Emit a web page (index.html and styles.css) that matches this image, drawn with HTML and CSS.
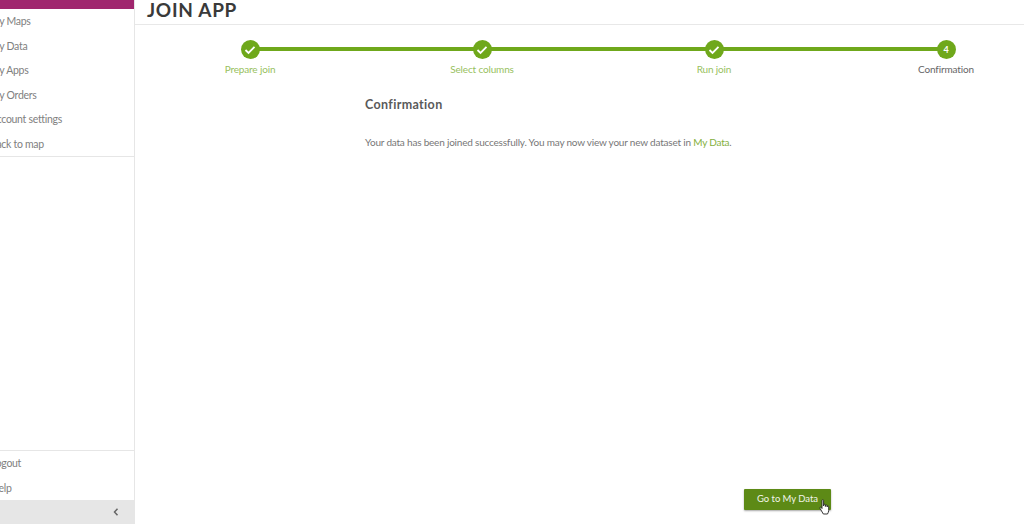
FILE: index.html
```html
<!DOCTYPE html>
<html lang="en">
<head>
<meta charset="utf-8">
<title>Join App</title>
<link rel="stylesheet" href="styles.css">
</head>
<body>
<div class="app">
  <aside class="sidebar">
    <div class="brand"></div>
    <nav class="nav nav-top">
      <a class="nav-item">My Maps</a>
      <a class="nav-item">My Data</a>
      <a class="nav-item">My Apps</a>
      <a class="nav-item">My Orders</a>
      <a class="nav-item">Account settings</a>
      <a class="nav-item">Back to map</a>
    </nav>
    <nav class="nav nav-bottom">
      <a class="nav-item">Logout</a>
      <a class="nav-item">Help</a>
    </nav>
    <div class="collapse">
      <svg class="collapse-icon" width="6" height="8" viewBox="0 0 6 8"><path d="M4.500 .8 1.500 4l3 3.200" fill="none" stroke="#666" stroke-width="1.500"/></svg>
    </div>
  </aside>
  <main class="main">
    <header class="header"><h1 class="title">JOIN APP</h1></header>
    <ol class="stepper">
      <li class="step done">
        <span class="dot"><svg width="12" height="10" viewBox="0 0 12 10"><path d="M1.500 5 4.500 8 10.500 1.800" fill="none" stroke="#fff" stroke-width="1.800"/></svg></span>
        <span class="label">Prepare join</span>
      </li>
      <li class="step done">
        <span class="dot"><svg width="12" height="10" viewBox="0 0 12 10"><path d="M1.500 5 4.500 8 10.500 1.800" fill="none" stroke="#fff" stroke-width="1.800"/></svg></span>
        <span class="label">Select columns</span>
      </li>
      <li class="step done">
        <span class="dot"><svg width="12" height="10" viewBox="0 0 12 10"><path d="M1.500 5 4.500 8 10.500 1.800" fill="none" stroke="#fff" stroke-width="1.800"/></svg></span>
        <span class="label">Run join</span>
      </li>
      <li class="step current">
        <span class="dot">4</span>
        <span class="label">Confirmation</span>
      </li>
    </ol>
    <section class="content">
      <h2 class="subtitle">Confirmation</h2>
      <p class="message">Your data has been joined successfully. You may now view your new dataset in <a class="link">My Data</a>.</p>
    </section>
    <div class="actions">
      <button class="button">Go to My Data
        <svg class="cursor" width="12" height="17" viewBox="0 0 12 17"><path d="M3 1.500c0-1 1.600-1 1.600 0V7l.2-1.200c.3-.8 1.500-.7 1.600.1V7.500l.2-1c.3-.7 1.400-.6 1.500.2v1.300l.2-.6c.4-.6 1.300-.4 1.400.3v3.800c0 1.500-.7 2.300-1.200 3.500H4.300L1 9.300c-.4-.9.500-1.500 1.200-.9L3 9.500z" fill="#fff" stroke="#222" stroke-width=".9"/></svg>
      </button>
    </div>
  </main>
</div>
</body>
</html>
```
FILE: styles.css
```css
* { box-sizing: border-box; }
html, body { margin: 0; height: 100%; }
body {
  width: 1024px;
  height: 524px;
  overflow: hidden;
  background: #fff;
  font-family: Lato, "Open Sans", sans-serif;
  color: #666;
}
.app { display: flex; height: 524px; }

.sidebar {
  width: 135px;
  flex: none;
  display: flex;
  flex-direction: column;
  border-right: 1px solid #e6e6e6;
  overflow: hidden;
}
.brand { height: 9px; background: #a0266e; flex: none; }
.nav { display: flex; flex-direction: column; }
.nav-top {
  border-bottom: 1px solid #e6e6e6;
  height: 148px;
  flex: none;
}
.nav-bottom {
  margin-top: auto;
  border-top: 1px solid #e6e6e6;
  height: 50px;
  flex: none;
}
.nav-item {
  height: 24.500px;
  line-height: 24px;
  margin-left: -10px;
  font-size: 10.500px;
  letter-spacing: -.3px;
  color: #808080;
  white-space: nowrap;
}
.nav-bottom .nav-item { margin-left: -9px; }
.collapse {
  height: 24px;
  flex: none;
  background: #e6e6e6;
  display: flex;
  align-items: center;
  justify-content: flex-end;
  padding-right: 15px;
}

.main { flex: 1; min-width: 0; display: flex; flex-direction: column; overflow: hidden; }
.header {
  height: 25px;
  flex: none;
  border-bottom: 1px solid #e8e8e8;
  padding-left: 12px;
}
.title {
  margin: 0;
  font-size: 19px;
  line-height: 20px;
  font-weight: 700;
  letter-spacing: .7px;
  color: #3a3a3a;
}

.stepper {
  list-style: none;
  margin: 15px 0 0 -1px;
  padding: 0;
  display: grid;
  grid-template-columns: repeat(4, 232px);
  flex: none;
}
.step {
  position: relative;
  display: flex;
  flex-direction: column;
  align-items: center;
  gap: 4px;
}
.step.done::after {
  content: "";
  position: absolute;
  top: 7px;
  left: 116px;
  width: 232px;
  height: 4px;
  background: #6fa81b;
}
.dot {
  position: relative;
  z-index: 1;
  width: 19px;
  height: 19px;
  border-radius: 50%;
  background: #6fa81b;
  color: #fff;
  font-size: 9px;
  font-weight: 700;
  display: flex;
  align-items: center;
  justify-content: center;
}
.label { font-size: 10px; line-height: 12px; color: #98bf60; letter-spacing: -.15px; white-space: nowrap; }
.current .label { color: #666; }

.content { margin: 22px 0 0 230px; flex: none; }
.subtitle {
  margin: 0;
  font-size: 12.500px;
  line-height: 16px;
  font-weight: 700;
  letter-spacing: .35px;
  color: #5a5a5a;
}
.message { margin: 22px 0 0; font-size: 10px; line-height: 14px; letter-spacing: -.2px; color: #777; white-space: nowrap; }
.link { color: #84b03c; }

.actions { margin-top: auto; padding: 0 0 14px 609px; }
.button {
  position: relative;
  display: block;
  width: 87px;
  height: 21px;
  padding: 0 0 2px 0;
  border: 0;
  border-radius: 1px;
  background: #5d8a16;
  box-shadow: 0 1px 2px rgba(0,0,0,.35);
  color: #f2f5ea;
  font-family: inherit;
  font-size: 9.500px;
  letter-spacing: -.05px;
}
.cursor { position: absolute; left: 75px; top: 10px; }
```
